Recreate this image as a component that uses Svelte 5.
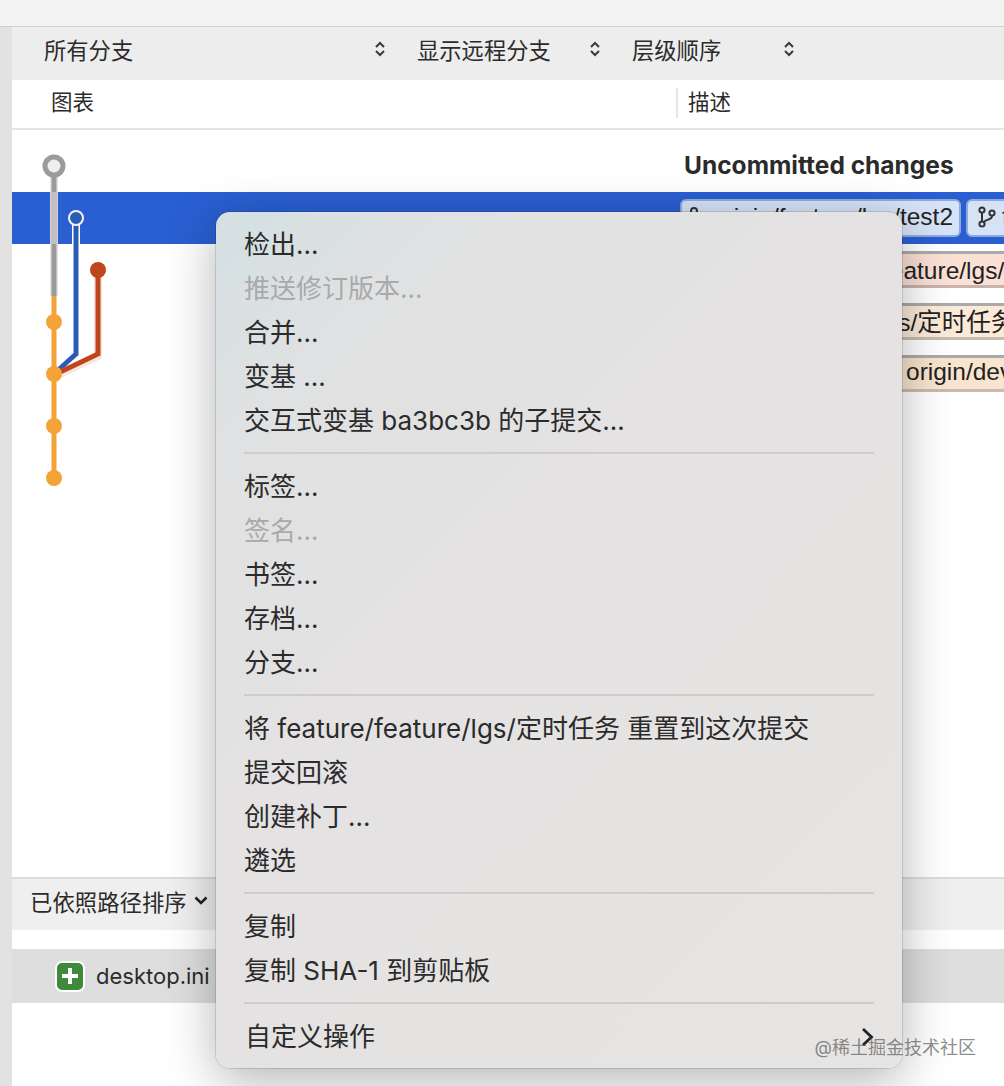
<script>
  const filters = [
    { label: '所有分支', width: 373 },
    { label: '显示远程分支', width: 215 },
    { label: '层级顺序', width: 194 }
  ]

  // graph nodes, coordinates are relative to the table body
  const nodes = [
    { x: 42, y: 192, color: '#f4a338' },
    { x: 42, y: 244, color: '#f4a338' },
    { x: 42, y: 296, color: '#f4a338' },
    { x: 42, y: 348, color: '#f4a338' },
    { x: 86, y: 140, color: '#bf451d' }
  ]

  const menu = [
    [{ label: '检出...' }, { label: '推送修订版本...', off: true }, { label: '合并...' }, { label: '变基 ...' }, { label: '交互式变基 ba3bc3b 的子提交...' }],
    [{ label: '标签...' }, { label: '签名...', off: true }, { label: '书签...' }, { label: '存档...' }, { label: '分支...' }],
    [{ label: '将 feature/feature/lgs/定时任务 重置到这次提交' }, { label: '提交回滚' }, { label: '创建补丁...' }, { label: '遴选' }],
    [{ label: '复制' }, { label: '复制 SHA-1 到剪贴板' }]
  ]
</script>

<div class="page">
  <div class="titlebar"></div>
  <div class="content">
    <div class="strip"></div>
    <div class="main">
      <div class="filters">
        {#each filters as f}
          <div class="select" style="width: {f.width}px">
            <span>{f.label}</span>
            <svg width="12" height="18" viewBox="0 0 12 18"><path d="M2 7l4-4 4 4M2 11l4 4 4-4" fill="none" stroke="#3a3a3a" stroke-width="2"/></svg>
          </div>
        {/each}
      </div>

      <div class="thead">
        <div class="th-graph">图表</div>
        <div class="th-desc">描述</div>
      </div>

      <div class="tbody">
        <svg class="graph" width="120" height="360" viewBox="0 0 120 360">
          <path d="M42 36V166" stroke="#e4e4e4" stroke-width="8" fill="none"/>
          <path d="M42 62V114" stroke="#c3bfc4" stroke-width="7" fill="none"/>
          <path d="M42 36V62M42 114V166" stroke="#9b9b9b" stroke-width="5" fill="none"/>
          <path d="M42 166V348" stroke="#f4a338" stroke-width="5" fill="none"/>
          <path d="M64 88V226L44 244" stroke="#fff" stroke-width="8" fill="none"/>
          <path d="M64 88V224L44 242" stroke="#2a5cb5" stroke-width="5" fill="none"/>
          <path d="M86 140V226L44 246" stroke="#f6e6e0" stroke-width="8" fill="none"/>
          <path d="M86 140V224L44 244" stroke="#bf451d" stroke-width="5" fill="none"/>
          <circle cx="42" cy="36" r="9" fill="#eee" stroke="#9b9b9b" stroke-width="5"/>
          <circle cx="64" cy="88" r="7" fill="#2a5cb5" stroke="#f2f2f2" stroke-width="2"/>
          {#each nodes as n}
            <circle cx={n.x} cy={n.y} r="8" fill={n.color}/>
          {/each}
        </svg>

        <div class="row first">
          <strong>Uncommitted changes</strong>
        </div>
        <div class="row selected">
          <span class="tag blue">
            <svg width="20" height="22" viewBox="0 0 20 22"><circle cx="6" cy="5" r="3" fill="none" stroke="#333" stroke-width="2"/></svg>
            origin/feature/lgs/test2
          </span>
          <span class="tag blue">
            <svg width="24" height="24" viewBox="-4 0 24 24"><g fill="none" stroke="#333" stroke-width="2"><circle cx="4" cy="5" r="2.6"/><circle cx="4" cy="19" r="2.6"/><circle cx="14" cy="8" r="2.6"/><path d="M4 8v8M14 11c0 4-6 3-8 6"/></g></svg>
            feature/lgs/test2
          </span>
        </div>
        <div class="row"><span class="tag plain pink">feature/lgs/工作流</span></div>
        <div class="row"><span class="tag plain cream">feature/lgs/定时任务</span></div>
        <div class="row"><span class="tag plain peach">origin/develop</span></div>
      </div>

      <div class="sortbar">
        <span>已依照路径排序</span>
        <svg width="14" height="10" viewBox="0 0 14 10"><path d="M1.5 1.5l5.5 5.5 5.5-5.5" fill="none" stroke="#222" stroke-width="2.6"/></svg>
      </div>
      <div class="files">
        <div class="file">
          <span class="added"><svg width="16" height="16" viewBox="0 0 16 16"><path d="M8 0v16M0 8h16" stroke="#fff" stroke-width="4"/></svg></span>
          <span>desktop.ini</span>
        </div>
      </div>
    </div>
  </div>

  <div class="menu">
    {#each menu as group}
      {#each group as item}
        <div class="item" class:off={item.off}>{item.label}</div>
      {/each}
      <div class="sep"></div>
    {/each}
    <div class="item custom">
      <span>自定义操作</span>
      <svg width="13" height="20" viewBox="0 0 13 20"><path d="M2 2l8.5 8-8.5 8" fill="none" stroke="#222" stroke-width="2.8"/></svg>
    </div>
  </div>

  <div class="watermark">@稀土掘金技术社区</div>
</div>

<style>
  :global(body) {
    background: #fff;
  }
  .page {
    position: relative;
    width: 1004px;
    height: 1086px;
    overflow: hidden;
    font-family: "Inter", "Noto Sans CJK SC", sans-serif;
    color: #2b2b2b;
  }
  .titlebar {
    height: 26px;
    background: #f3f3f3;
    border-bottom: 1px solid #cfcfcf;
  }
  .content {
    display: flex;
    height: 1059px;
  }
  .strip {
    width: 12px;
    background: #e2e2e2;
    flex: none;
  }
  .main {
    flex: 1;
    min-width: 0;
    display: flex;
    flex-direction: column;
  }
  .filters {
    display: flex;
    height: 53px;
    box-sizing: border-box;
    padding: 0 0 10px 32px;
    align-items: center;
    background: #ededed;
    font-size: 22.3px;
  }
  .select {
    display: flex;
    align-items: center;
    justify-content: space-between;
    padding-right: 31px;
    box-sizing: border-box;
    flex: none;
  }
  .thead {
    display: flex;
    align-items: center;
    height: 50px;
    box-sizing: border-box;
    padding-bottom: 2px;
    border-bottom: 2px solid #e4e4e4;
    font-size: 21.5px;
  }
  .th-graph {
    width: 664px;
    padding-left: 39px;
    padding-bottom: 2px;
    box-sizing: border-box;
    line-height: 26px;
  }
  .th-desc {
    border-left: 2px solid #e6e6e6;
    height: 30px;
    line-height: 28px;
    padding-left: 10px;
  }
  .tbody {
    position: relative;
    height: 749px;
    flex: none;
    box-sizing: border-box;
    border-bottom: 2px solid #dcdcdc;
  }
  .graph {
    position: absolute;
    left: 0;
    top: 0;
    z-index: 1;
  }
  .row {
    display: flex;
    align-items: center;
    gap: 5px;
    height: 52px;
    padding-left: 668px;
    white-space: nowrap;
    overflow: hidden;
  }
  .first {
    height: 62px;
    padding-left: 672px;
    padding-top: 8px;
    box-sizing: border-box;
    font-size: 24.5px;
  }
  .selected {
    background: #2a5fd2;
  }
  .tag {
    display: inline-flex;
    align-items: center;
    height: 38px;
    box-sizing: border-box;
    padding: 0 6px 2px;
    border-radius: 6px;
    font-family: "Liberation Sans", "Noto Sans CJK SC", sans-serif;
    font-size: 24.5px;
    color: #222;
    flex: none;
  }
  .blue {
    background: #d6e2f6;
    border: 2px solid #8ea9dc;
    gap: 4px;
  }
  .plain {
    height: 37px;
    margin-top: -2px;
    border-top: 3px solid #aaa;
    border-bottom: 3px solid #c8bcae;
  }
  .pink {
    background: #fbe0d6;
    border-bottom-color: #c8b4ac;
    padding-left: 203px;
  }
  .cream {
    background: #fcead9;
    padding-left: 116px;
  }
  .peach {
    background: #f9e5cf;
    padding-left: 226px;
  }
  .sortbar {
    display: flex;
    align-items: center;
    gap: 7px;
    height: 51px;
    box-sizing: border-box;
    padding: 0 0 7px 18px;
    background: #efefef;
    font-size: 22.4px;
    flex: none;
  }
  .files {
    flex: 1;
    padding-top: 19px;
  }
  .file {
    display: flex;
    align-items: center;
    gap: 11px;
    height: 54px;
    padding-left: 43px;
    background: #dedede;
    font-size: 22px;
  }
  .added {
    display: flex;
    align-items: center;
    justify-content: center;
    width: 30px;
    height: 31px;
    box-sizing: border-box;
    background: #3f8a3a;
    border: 2px solid #fff;
    border-radius: 7px;
  }
  .menu {
    position: absolute;
    left: 216px;
    top: 212px;
    width: 686px;
    height: 856px;
    box-sizing: border-box;
    padding: 11px 28px 9px;
    border-radius: 14px;
    background: linear-gradient(135deg, #d3e0e2 0%, #e0e1e2 16%, #e4e2e2 40%, #e6e5e3 100%);
    box-shadow: 0 0 0 1px rgba(0, 0, 0, 0.12), 0 12px 50px rgba(0, 0, 0, 0.3);
    z-index: 2;
    font-size: 26px;
  }
  .item {
    height: 44px;
    line-height: 44px;
    white-space: nowrap;
  }
  .off {
    color: #a9a9a9;
  }
  .sep {
    height: 2px;
    margin: 9px 0 11px;
    background: #cfcdcc;
  }
  .custom {
    display: flex;
    align-items: center;
    justify-content: space-between;
    padding-left: 1px;
  }
  .watermark {
    position: absolute;
    right: 28px;
    top: 1033px;
    z-index: 3;
    font-size: 18px;
    color: rgba(90, 90, 90, 0.7);
  }
</style>
